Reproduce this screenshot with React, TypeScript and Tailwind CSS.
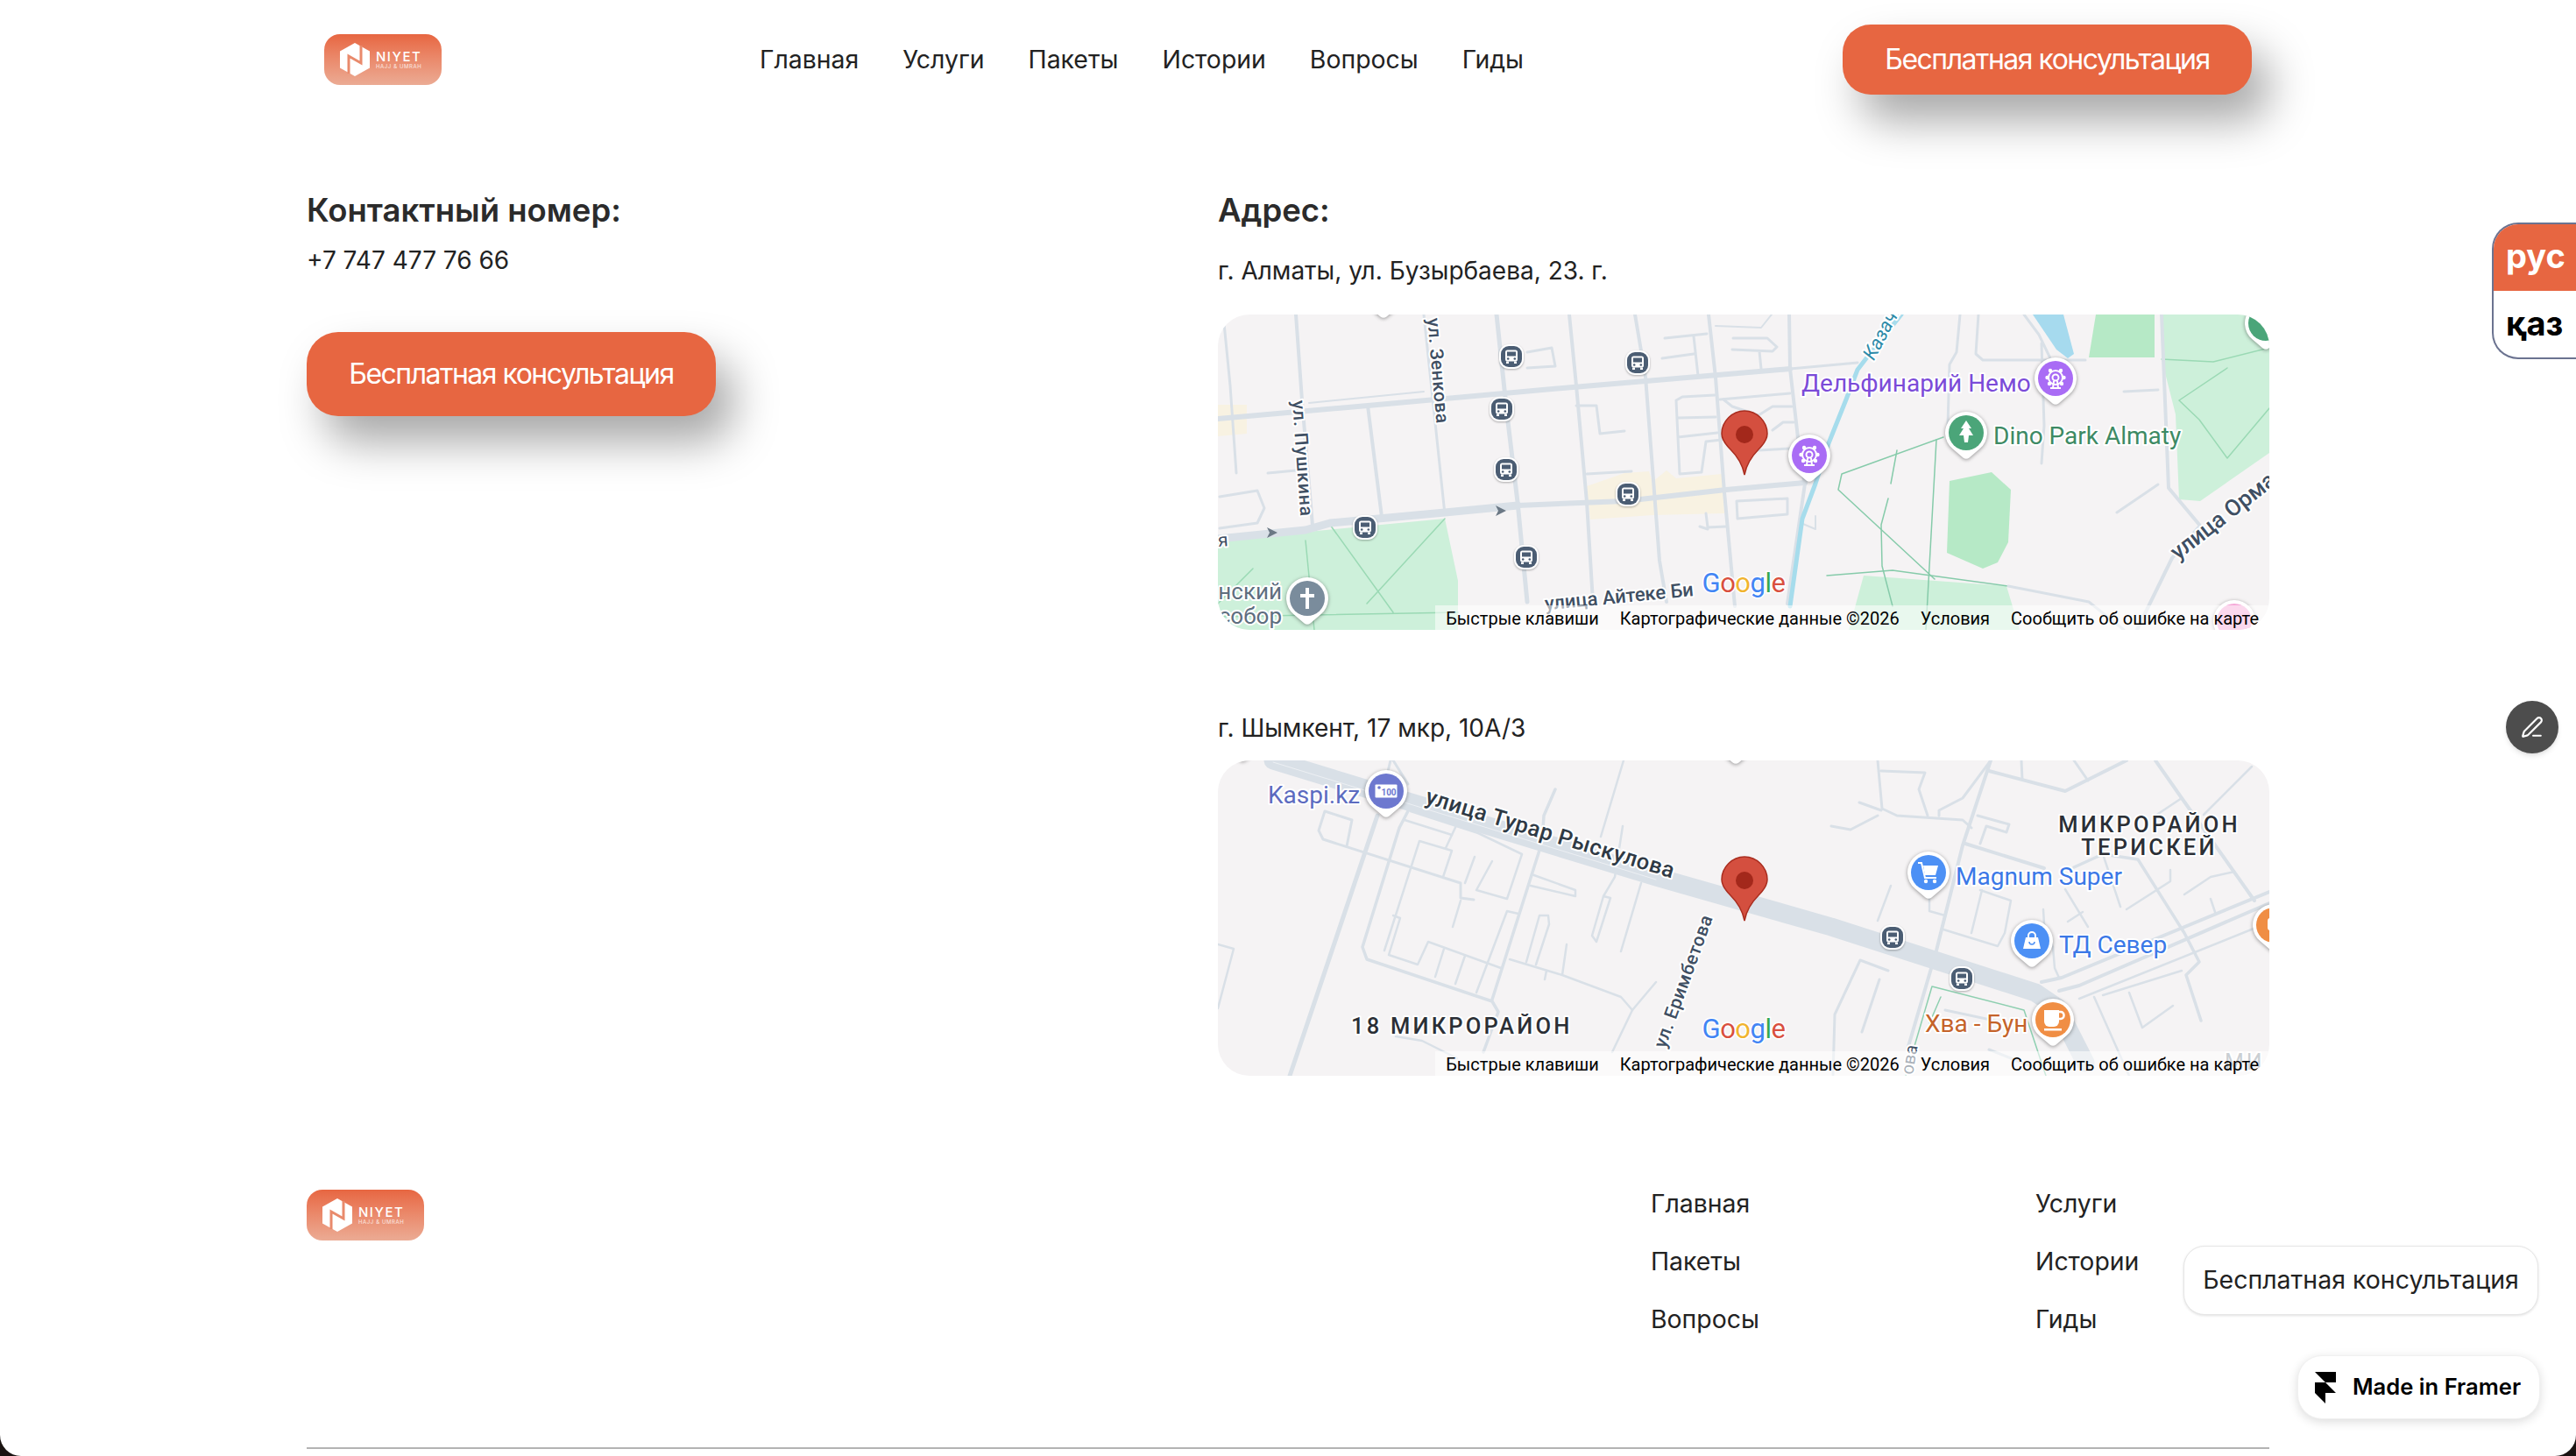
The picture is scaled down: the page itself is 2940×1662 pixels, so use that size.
import { PenLine } from 'lucide-react';
import type { ReactNode } from 'react';

const navLinks = ['Главная', 'Услуги', 'Пакеты', 'Истории', 'Вопросы', 'Гиды'];
const footerLinks = ['Главная', 'Услуги', 'Пакеты', 'Истории', 'Вопросы', 'Гиды'];

function Logo() {
  return (
    <div className="relative h-[58px] w-[134px] shrink-0 rounded-[18px] bg-gradient-to-b from-[#e76641] to-[#ebab94] text-white">
      <svg className="absolute left-[18px] top-[10px]" width="34" height="38" viewBox="0 0 34 38">
        <path d="M17 0 34 9.500v19L17 38 0 28.500v-19z" fill="#fff" />
        <path d="M10 35V15L24 23V3" fill="none" stroke="#e98a6c" strokeWidth="3" />
      </svg>
      <span className="absolute left-[59px] top-[17px] text-[15px] font-medium leading-[18px] tracking-[1.5px]">NIYET</span>
      <span className="absolute left-[59px] top-[33px] text-[6px] leading-[8px] tracking-[0.6px] text-white/80">HAJJ &amp; UMRAH</span>
    </div>
  );
}

function ConsultButton({ className }: { className: string }) {
  return (
    <button className={`${className} bg-[#e76641] text-[32px] font-normal tracking-[-0.047em] text-white shadow-[20px_30px_50px_rgba(0,0,0,0.34)]`}>
      Бесплатная консультация
    </button>
  );
}

function Road({ d, w = 3, color = '#d9e0e7' }: { d: string; w?: number; color?: string }) {
  return <path d={d} fill="none" stroke={color} strokeWidth={w} strokeLinejoin="round" strokeLinecap="round" />;
}

type LabelProps = {
  x: number;
  y: number;
  fill: string;
  size?: number;
  rotate?: number;
  anchor?: 'start' | 'middle' | 'end';
  spacing?: number;
  weight?: number;
  italic?: boolean;
  children: ReactNode;
};

function Label({ x, y, fill, size = 28, rotate = 0, anchor = 'start', spacing = 0, weight = 400, italic, children }: LabelProps) {
  return (
    <text
      x={x}
      y={y}
      fill={fill}
      fontSize={size}
      fontWeight={weight}
      fontFamily="Roboto, sans-serif"
      fontStyle={italic ? 'italic' : 'normal'}
      letterSpacing={spacing}
      textAnchor={anchor}
      dominantBaseline="central"
      stroke="#ffffff"
      strokeWidth="4"
      strokeLinejoin="round"
      paintOrder="stroke"
      transform={rotate ? `rotate(${rotate} ${x} ${y})` : undefined}
    >
      {children}
    </text>
  );
}

function PoiPin({ x, y, fill, children }: { x: number; y: number; fill: string; children?: ReactNode }) {
  return (
    <g transform={`translate(${x} ${y})`}>
      <path
        className="drop-shadow-[0_1px_2px_rgba(0,0,0,0.4)]"
        d="M-3.500 28.500-15.500 18.300A24 24 0 1 1 15.500 18.300L3.500 28.500Q0 31-3.500 28.500Z"
        fill="#fff"
      />
      <circle r="20" fill={fill} />
      {children}
    </g>
  );
}

function Wheel() {
  return (
    <g fill="none" stroke="#fff" strokeWidth="2">
      <circle cy="-1" r="8" />
      <circle cy="-1" r="3.500" />
      <g fill="#fff" stroke="none">
        <circle cx="-6" cy="-9" r="2.200" />
        <circle cx="6" cy="-9" r="2.200" />
        <circle cx="-9.500" cy="-1" r="2.200" />
        <circle cx="9.500" cy="-1" r="2.200" />
        <circle cx="-7" cy="6" r="2.200" />
        <circle cx="7" cy="6" r="2.200" />
      </g>
      <path d="M-6 11H6M-2 3-3 11M2 3 3 11" />
    </g>
  );
}

function BusStop({ x, y }: { x: number; y: number }) {
  return (
    <g transform={`translate(${x} ${y})`}>
      <rect className="drop-shadow-[0_1px_1px_rgba(0,0,0,0.3)]" x="-14" y="-14" width="28" height="28" rx="11" fill="#fff" />
      <rect x="-12" y="-12" width="24" height="24" rx="9" fill="#4b5d73" />
      <rect x="-7" y="-7.500" width="14" height="13" rx="2.500" fill="#fff" />
      <rect x="-5" y="-5.500" width="10" height="5" fill="#4b5d73" />
      <circle cx="-3.800" cy="2.500" r="1.300" fill="#4b5d73" />
      <circle cx="3.800" cy="2.500" r="1.300" fill="#4b5d73" />
      <rect x="-6" y="5.500" width="3" height="2.500" fill="#fff" />
      <rect x="3" y="5.500" width="3" height="2.500" fill="#fff" />
    </g>
  );
}

function RedPin() {
  return (
    <g transform="translate(601 110)">
      <path
        d="M0 73C-2 62-8 52-16 44-22 38-26 33-26 26-26 12-14 0 0 0S26 12 26 26C26 33 22 38 16 44 8 52 2 62 0 73Z"
        fill="#d44f3f"
        stroke="#a92d1f"
        strokeWidth="1.500"
      />
      <circle cy="27" r="10" fill="#a3281b" />
    </g>
  );
}

function GoogleMark() {
  return (
    <text x="600" y="317" textAnchor="middle" fontSize="31" fontWeight="400" fontFamily="Roboto, sans-serif" letterSpacing="-0.5" stroke="#ffffff" strokeWidth="3" paintOrder="stroke">
      <tspan fill="#4285f4">G</tspan>
      <tspan fill="#d9503f">o</tspan>
      <tspan fill="#f1b42f">o</tspan>
      <tspan fill="#4285f4">g</tspan>
      <tspan fill="#34a853">l</tspan>
      <tspan fill="#d9503f">e</tspan>
    </text>
  );
}

function Attribution() {
  return (
    <div className="absolute bottom-0 right-0 flex h-[28px] bg-white/55 font-[Roboto,sans-serif] text-[20px] leading-[31px] text-black">
      <span className="px-3">Быстрые клавиши</span>
      <span className="px-3">Картографические данные ©2026</span>
      <span className="px-3">Условия</span>
      <span className="px-3">Сообщить об ошибке на карте</span>
    </div>
  );
}

function AlmatyMap() {
  return (
    <div className="relative h-[360px] w-[1200px] overflow-hidden rounded-[36px] bg-[#f5f3f4]">
      <svg className="block" width="1200" height="360" viewBox="0 0 1200 360">
        <path d="M0 103H33V136L0 139Z" fill="#f8f2e2" />
        <path d="M421 196 464 181 492 179 496 191 512 178 523 187 575 182 578 227 496 229 425 234Z" fill="#f8f2e2" />
        <path d="M1002 0H1069V49H994Z" fill="#b6e9c6" />
        <path d="M1077 0H1200V158L1121 213 1097 211 1093 114 1077 51Z" fill="#cdf0da" />
        <path d="M835 190 883 180 905 200 902 260 890 283 873 290 832 272Z" fill="#b6e9c6" />
        <path d="M737 298 900 310 915 360H720Z" fill="#cdf0da" />
        <path d="M0 258 259 233 274 304V360H0Z" fill="#cdf0da" />
        <path d="M930 0H965L977 45 970 50 957 40Z" fill="#a6daee" />

        <Road d="M828 140 712 182 708 200 818 302" w={1.500} color="#86cbaa" />
        <Road d="M695 298 770 292 902 310" w={1.500} color="#86cbaa" />
        <Road d="M820 143 808 360" w={1.500} color="#86cbaa" />
        <Road d="M775 155 768 193M765 210 757 240 758 287 770 333" w={1.500} color="#86cbaa" />
        <Road d="M1077 51 1136 54 1200 38M1097 98 1152 61M1152 164 1200 107M1097 98 1120 120 1152 164" w={1.500} color="#9ad9b4" />
        <Road d="M100 258 110 360M128 240 200 340M259 233 170 330M0 345 274 340M40 290 0 330" w={1.500} color="#9ad9b4" />

        <Road d="M6 0 14 81 21 181M2 208 45 201 53 221 45 238 2 244" />
        <Road d="M57 181 89 178" />
        <Road d="M89 0 96 98 108 241" w={4} />
        <Road d="M104 101 235 88" w={2} />
        <Road d="M171 104 187 231" w={4} />
        <Road d="M235 0 259 228" w={3} />
        <Road d="M318 0 330 114 342 214 353 328" w={5} />
        <Road d="M401 0 409 81 421 214 428 328" w={4} />
        <Road d="M476 0 488 71 504 281 512 328" w={4} />
        <Road d="M560 0 568 72 578 203 590 333" w={4} />
        <Road d="M652 0 653 62 665 167 670 193 650 330" w={4} />
        <Road d="M510 27 558 22M507 50 543 45M543 25 548 70M588 27 627 27 638 37 633 42 587 40M618 42 620 62M353 43 381 38 385 59 353 61" />
        <Road d="M568 13 620 15 632 0" w={2} />
        <Road d="M409 104 432 104 436 136 464 133" />
        <Road d="M573 97 653 90M523 98 527 182 552 180 557 145 575 143M525 118 568 117M525 140 570 135M523 98 530 94 567 92" />
        <Road d="M577 97 587 105 617 115 633 105 655 105M617 155 653 153M633 132 645 123 657 123" />
        <Road d="M592 213 650 210 650 228 593 233ZM421 182 472 179M557 227 559 243 580 242M550 242 559 245" />
        <Road d="M663 237 682 245 682 230" w={2} />
        <Road d="M847 0 843 43 835 57 833 127M868 0 865 45 873 52 990 52M920 0 937 23 950 50M940 33 943 127 940 170" />
        <Road d="M1034 88 1073 86M1026 226 1073 194" />
        <Road d="M1077 0 1085 198 1121 241 1089 278 1049 360" w={4} />
        <Road d="M902 310 994 328 1034 360" />

        <Road d="M0 119 171 104 405 83 500 75 653 62" w={6} />
        <Road d="M653 62 730 55" w={3} />
        <Road d="M0 256 100 246 128 238 259 226 342 218" w={9} />
        <Road d="M342 218 464 213 580 200 670 192" w={6} />
        <Road d="M780 0 740 50 730 63 717 97 697 147 682 193 667 233 653 333" w={5} color="#a6dcec" />

        <path d="M56 243l12 6-12 6 3-6zM317 218l12 6-12 6 3-6z" fill="#6b7885" />

        <Label x={742} y={50} rotate={-62} fill="#2d8aa8" size={22} italic>Казачка</Label>
        <Label x={246} y={4} rotate={85} fill="#3f4f63" size={21} weight={500} spacing={0.5}>ул. Зенкова</Label>
        <Label x={92} y={98} rotate={86} fill="#3f4f63" size={21} weight={500} spacing={1}>ул. Пушкина</Label>
        <Label x={373} y={330} rotate={-5.500} fill="#3f4f63" size={22} weight={500}>улица Айтеке Би</Label>
        <Label x={1090} y={274} rotate={-38} fill="#3f4f63" size={26} weight={500}>улица Орман</Label>
        <Label x={0} y={258} rotate={-4} fill="#3f4f63" size={21}>я</Label>
        <Label x={73} y={316} anchor="end" fill="#5e6e7e" size={26}>нский</Label>
        <Label x={73} y={344} anchor="end" fill="#5e6e7e" size={26}>собор</Label>
        <Label x={666} y={78} fill="#7b4bd8" size={28}>Дельфинарий Немо</Label>
        <Label x={885} y={138} fill="#3d8a64" size={28}>Dino Park Almaty</Label>

        <BusStop x={335} y={48} />
        <BusStop x={479} y={55} />
        <BusStop x={324} y={108} />
        <BusStop x={329} y={177} />
        <BusStop x={468} y={205} />
        <BusStop x={168} y={243} />
        <BusStop x={352} y={277} />

        <PoiPin x={956} y={73} fill="#a96cf5"><Wheel /></PoiPin>
        <PoiPin x={675} y={161} fill="#a96cf5"><Wheel /></PoiPin>
        <PoiPin x={854} y={135} fill="#4ba579">
          <path d="M0-14 6-5H3L8 3H3L2 11H-2L-3 3H-8L-3-5H-6Z" fill="#fff" />
        </PoiPin>
        <PoiPin x={102} y={324} fill="#7a8c9c">
          <path d="M-2-12H2V-5H8V-1H2V12H-2V-1H-8V-5H-2Z" fill="#fff" />
        </PoiPin>
        <PoiPin x={1196} y={10} fill="#4ba579" />
        <PoiPin x={189} y={-26} fill="#7a8c9c" />
        <PoiPin x={1160} y={350} fill="#f5a9d8" />

        <GoogleMark />
        <RedPin />
      </svg>
      <Attribution />
    </div>
  );
}

function ShymkentMap() {
  return (
    <div className="relative h-[360px] w-[1200px] overflow-hidden rounded-[36px] bg-[#f5f3f4]">
      <svg className="block" width="1200" height="360" viewBox="0 0 1200 360">
        <Road d="M182 63 82 360" w={5} />
        <Road d="M200 0 217 27M197 0 190 30" w={3} />
        <Road d="M220 52 207 77 165 213 170 227 313 275 320 287 303 333" w={3.500} />
        <Road d="M213 68 267 85M220 58 297 83 347 107 330 158 295 148 313 115" w={2.500} />
        <Road d="M122 58 153 68 147 98M122 58 115 80 120 90 277 140 277 157 292 159" />
        <Road d="M230 92 267 103 257 133M230 92 190 217M275 68 260 100M293 110 282 140M277 160 268 190" w={2.500} />
        <Road d="M200 177 208 180 195 222 228 233 240 207 323 237M258 215 248 247M282 223 271 255" w={2.500} />
        <Road d="M330 172 343 175M330 172 295 265" w={2.500} />
        <Road d="M385 33 372 63 370 93 313 273" w={3.500} />
        <Road d="M463 0 437 87M462 75 453 133 440 155 427 200 432 207 448 157 440 155M483 140 460 218" w={2.500} />
        <Road d="M358 130 408 148 408 155 357 143" w={2.500} />
        <Road d="M333 227 393 245 460 270 473 285 450 333M367 177 377 177 378 187 363 233M367 177 352 230M398 210 393 245M375 240 373 250" w={2.500} />
        <Road d="M0 210 18 215 0 283M473 285 500 253M203 315 233 320 273 340" w={2.500} />

        <Road d="M753 0 758 55 775 63 850 68 860 77M757 12 807 14 800 33 810 63M732 48 757 57M700 75 722 79 753 63M823 63 823 57 850 43 882 0" />
        <Road d="M882 0 850 97 820 217 787 330" w={4} />
        <Road d="M880 12 967 35 1037 0" w={4} />
        <Road d="M917 0 918 22M977 0 993 23" w={3} />
        <Road d="M1070 0 1100 43 1183 160" w={4} />
        <Road d="M1100 43 1067 65M1180 7 1125 62" w={2.500} />
        <Road d="M867 63 903 73 900 82 877 75 870 95" w={3} />
        <Road d="M853 95 943 123" w={4} />
        <Road d="M977 122 1010 107 1050 113 1103 197 1120 230 1105 245 1122 297" w={3.500} />
        <Road d="M1010 107 1030 167M1037 170 1087 138 1087 125M1103 153 1133 133 1160 127 1180 157M1133 158 1138 173" w={2.500} />
        <Road d="M967 147 993 190M970 184 987 173M942 170 943 187 953 213 955 237 960 248" w={2.500} />
        <Road d="M870 148 905 160 898 197 890 212 828 193M872 148 860 197M812 157 812 172 830 177M768 143 753 183" w={2.500} />
        <Road d="M940 253 963 248 1200 150" w={4} />
        <Road d="M960 263 983 257 1200 163" w={4} />
        <Road d="M983 272 1187 190" w={2.500} />
        <Road d="M1000 270 1040 360M1010 268 1100 240M1040 265 1055 305 1090 280" w={2.500} />
        <Road d="M733 228 765 240M733 228 704 290 702 359M755 250 735 310" w={3} />
        <Road d="M815 258 785 360M815 258 920 285 945 360M825 270 812 300" w={1.500} color="#8ecfb0" />
        <Road d="M830 285 900 300M880 330 930 350" w={3} />
        <Road d="M63 0 500 133 700 190 933 265 958 282 990 345" w={21} />
        <Road d="M63 2 500 136" w={1} color="#eceff3" />

        <Label x={238} y={40} rotate={16.900} fill="#2f3a45" size={25.500} weight={500} spacing={0.5}>улица Турар Рыскулова</Label>
        <Label x={504} y={327} rotate={-70} fill="#3f4f63" size={21} weight={500} spacing={0.5}>ул. Еримбетова</Label>
        <Label x={786} y={358} rotate={-80} fill="#3f4f63" size={20}>ова</Label>
        <Label x={1063} y={73} anchor="middle" fill="#2b2f36" size={25.500} weight={500} spacing={3.200}>МИКРОРАЙОН</Label>
        <Label x={1063} y={99} anchor="middle" fill="#2b2f36" size={25.500} weight={500} spacing={3.200}>ТЕРИСКЕЙ</Label>
        <Label x={152} y={303} fill="#2b2f36" size={25.500} weight={500} spacing={3.200}>18 МИКРОРАЙОН</Label>
        <Label x={1149} y={344} fill="#8a949e" size={25} spacing={3}>МИ</Label>
        <Label x={57} y={39} fill="#5c6bc0" size={28}>Kaspi.kz</Label>
        <Label x={842} y={132} fill="#3b78e7" size={28}>Magnum Super</Label>
        <Label x={960} y={210} fill="#3b78e7" size={28}>ТД Север</Label>
        <Label x={807} y={300} fill="#c5632a" size={28}>Хва - Бун</Label>

        <BusStop x={770} y={202} />
        <BusStop x={849} y={249} />

        <PoiPin x={192} y={35} fill="#6d78cf">
          <rect x="-12.500" y="-7.500" width="25" height="15" rx="1" fill="#fff" />
          <circle cx="-8" cy="-4" r="1.800" fill="#6d78cf" />
          <text x="3" y="5" fontSize="10" fontWeight="700" fontFamily="Roboto, sans-serif" textAnchor="middle" fill="#6d78cf">100</text>
        </PoiPin>
        <PoiPin x={811} y={128} fill="#4c90f5">
          <path d="M-6-8H11L8 3H-4Z" fill="#fff" />
          <path d="M-12-11H-8L-4 6H9" fill="none" stroke="#fff" strokeWidth="2" />
          <circle cx="-3" cy="10" r="2.200" fill="#fff" />
          <circle cx="7" cy="10" r="2.200" fill="#fff" />
        </PoiPin>
        <PoiPin x={929} y={206} fill="#4c90f5">
          <path d="M-7-4H7L10 9H-10Z" fill="#fff" />
          <path d="M-4-4V-6A4 4 0 0 1 4-6V-4" fill="none" stroke="#fff" strokeWidth="2" />
          <path d="M-3 1A3 3 0 0 0 3 1" fill="none" stroke="#4c90f5" strokeWidth="1.500" />
        </PoiPin>
        <PoiPin x={953} y={296} fill="#f08e44">
          <path d="M-10-11H7V2A6 6 0 0 1 1 8H-4A6 6 0 0 1-10 2Z" fill="#fff" />
          <path d="M7-9H9A3.500 3.500 0 0 1 12.500-5.500V-4.500A3.500 3.500 0 0 1 9-1H7" fill="none" stroke="#fff" strokeWidth="2.500" />
          <rect x="-10" y="10" width="20" height="2.500" fill="#fff" />
        </PoiPin>
        <PoiPin x={1205} y={188} fill="#f08e44">
          <rect x="-7" y="-8" width="14" height="14" rx="3" fill="#fff" />
        </PoiPin>
        <PoiPin x={591} y={-26} fill="#7a8c9c" />
        <PoiPin x={28} y={-29} fill="#7a8c9c" />

        <GoogleMark />
        <RedPin />
      </svg>
      <Attribution />
    </div>
  );
}

export default function App() {
  return (
    <div className="h-[1662px] w-full overflow-hidden bg-[#1a1412] font-[Inter,sans-serif]">
      <div className="relative h-full overflow-hidden rounded-b-[24px] bg-white">
        <div className="mx-auto w-[2240px]">
          <header className="flex h-[136px] items-center px-5">
            <Logo />
            <nav className="ml-[363px] flex gap-[50px] pb-[1px] text-[28.4px] font-normal leading-[40px] text-[#222222]">
              {navLinks.map((link) => (
                <a key={link}>{link}</a>
              ))}
            </nav>
            <ConsultButton className="ml-auto h-[80px] w-[467px] rounded-[32px]" />
          </header>

          <main className="grid grid-cols-[1040px_1200px] pt-[82px]">
            <section>
              <h2 className="text-[36.5px] font-semibold leading-[44px] text-[#2b2b2b]">Контактный номер:</h2>
              <p className="mt-[15px] text-[28px] leading-[40px] text-[#222222]">+7 747 477 76 66</p>
              <ConsultButton className="mt-[62px] h-[96px] w-[467px] rounded-[36px]" />
            </section>
            <section>
              <h2 className="text-[36.5px] font-semibold leading-[44px] text-[#2b2b2b]">Адрес:</h2>
              <p className="mt-[27px] text-[28px] leading-[40px] text-[#222222]">г. Алматы, ул. Бузырбаева, 23. г.</p>
              <div className="mt-[30px]">
                <AlmatyMap />
              </div>
              <p className="mt-[92px] text-[28px] leading-[40px] text-[#222222]">г. Шымкент, 17 мкр, 10А/3</p>
              <div className="mt-[17px]">
                <ShymkentMap />
              </div>
            </section>
          </main>

          <footer className="mt-[125px] flex items-start">
            <div className="mt-[5px]">
              <Logo />
            </div>
            <div className="ml-[1400px] grid grid-cols-[439px_auto] gap-y-[26px] pt-[1px] text-[28.4px] leading-[40px] text-[#222222]">
              {footerLinks.map((link) => (
                <a key={link}>{link}</a>
              ))}
            </div>
          </footer>
          <div className="mt-[126px] h-[2px] bg-[#b3b3b3]" />
        </div>

        <div className="absolute right-0 top-[254px] w-[96px] overflow-hidden rounded-l-[30px] border-y-2 border-l-2 border-[#6b7390] bg-white text-[38px] font-bold">
          <div className="h-[76px] bg-[#e76641] pl-[14px] leading-[72px] text-white">рус</div>
          <div className="h-[76px] pl-[14px] leading-[74px] text-black">қаз</div>
        </div>

        <button className="absolute left-[2860px] top-[800px] flex h-[60px] w-[60px] items-center justify-center rounded-full bg-[#4d4d4d] text-white shadow-md">
          <PenLine size={26} strokeWidth={2} />
        </button>

        <div className="absolute left-[2492px] top-[1422px] flex h-[79px] w-[405px] items-center justify-center rounded-[24px] border border-[#e6e6e6] bg-white text-[28.5px] text-[#222222] shadow-[0_1px_3px_rgba(0,0,0,0.12)]">
          Бесплатная консультация
        </div>

        <div className="absolute left-[2622px] top-[1547px] flex h-[73px] w-[277px] items-center gap-[19px] rounded-[28px] border border-[#f0f0f0] bg-white pl-[19px] text-[25.6px] font-semibold text-black shadow-[0_3px_12px_rgba(0,0,0,0.14)]">
          <svg width="24" height="36" viewBox="0 0 24 36" fill="#000">
            <path d="M0 0h24v12H12L0 0zM0 12h12l12 12H12v12L0 24V12z" />
          </svg>
          Made in Framer
        </div>
      </div>
    </div>
  );
}
